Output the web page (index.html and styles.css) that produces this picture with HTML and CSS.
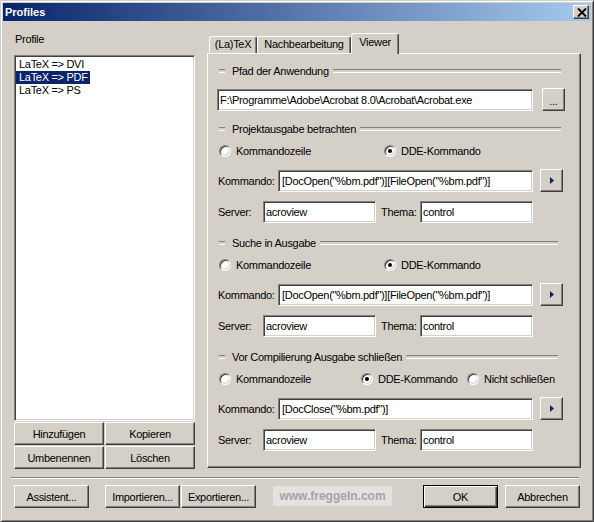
FILE: index.html
```html
<!DOCTYPE html>
<html lang="de">

<head>
    <meta charset="UTF-8">
    <title>Profiles</title>
    <link rel="stylesheet" href="styles.css">
</head>

<body>

    <div class="window">
        <div class="titlebar">
            <span class="title">Profiles</span>
            <button class="close-btn">
                <svg width="10" height="9" viewBox="0 0 10 9">
                    <path d="M1 0.5 L9 8.5 M9 0.5 L1 8.5" stroke="#000" stroke-width="1.9" fill="none" />
                </svg>
            </button>
        </div>

        <div class="main">
            <!-- Profil-Liste -->
            <div class="left-col">
                <div class="caption">Profile</div>
                <div class="listbox">
                    <div class="item"><span>LaTeX =&gt; DVI</span></div>
                    <div class="item selected"><span>LaTeX =&gt; PDF</span></div>
                    <div class="item"><span>LaTeX =&gt; PS</span></div>
                </div>
                <div class="btn-grid">
                    <button class="btn">Hinzufügen</button>
                    <button class="btn">Kopieren</button>
                    <button class="btn">Umbenennen</button>
                    <button class="btn">Löschen</button>
                </div>
            </div>

            <!-- Registerkarten -->
            <div class="right-col">
                <div class="tabs">
                    <div class="tab tab-latex">(La)TeX</div>
                    <div class="tab tab-post">Nachbearbeitung</div>
                    <div class="tab tab-viewer active">Viewer</div>
                </div>
                <div class="panel">
                    <div class="legend wide">Pfad der Anwendung</div>
                    <div class="row path-row">
                        <input class="field path-field" type="text" value="F:\Programme\Adobe\Acrobat 8.0\Acrobat\Acrobat.exe">
                        <button class="btn small-btn browse">...</button>
                    </div>

                    <div class="legend wide gap-top">Projektausgabe betrachten</div>
                    <div class="row radio-row">
                        <div class="opt opt-first"><span class="radio"></span>Kommandozeile</div>
                        <div class="opt"><span class="radio checked"></span>DDE-Kommando</div>
                    </div>
                    <div class="row cmd-row">
                        <label class="lbl lbl-cmd">Kommando:</label>
                        <input class="field cmd-field" type="text" value="[DocOpen(&quot;%bm.pdf&quot;)][FileOpen(&quot;%bm.pdf&quot;)]">
                        <button class="btn small-btn arrow"><svg width="4" height="7" viewBox="0 0 4 7"><path d="M0 0 L4 3.5 L0 7 Z" fill="#0a246a" /></svg></button>
                    </div>
                    <div class="row server-row">
                        <label class="lbl lbl-server">Server:</label>
                        <input class="field short-field" type="text" value="acroview">
                        <label class="lbl lbl-topic">Thema:</label>
                        <input class="field short-field" type="text" value="control">
                    </div>

                    <div class="legend gap-top-lg">Suche in Ausgabe</div>
                    <div class="row radio-row">
                        <div class="opt opt-first"><span class="radio"></span>Kommandozeile</div>
                        <div class="opt"><span class="radio checked"></span>DDE-Kommando</div>
                    </div>
                    <div class="row cmd-row">
                        <label class="lbl lbl-cmd">Kommando:</label>
                        <input class="field cmd-field" type="text" value="[DocOpen(&quot;%bm.pdf&quot;)][FileOpen(&quot;%bm.pdf&quot;)]">
                        <button class="btn small-btn arrow"><svg width="4" height="7" viewBox="0 0 4 7"><path d="M0 0 L4 3.5 L0 7 Z" fill="#0a246a" /></svg></button>
                    </div>
                    <div class="row server-row">
                        <label class="lbl lbl-server">Server:</label>
                        <input class="field short-field" type="text" value="acroview">
                        <label class="lbl lbl-topic">Thema:</label>
                        <input class="field short-field" type="text" value="control">
                    </div>

                    <div class="legend gap-top-lg">Vor Compilierung Ausgabe schließen</div>
                    <div class="row radio-row">
                        <div class="opt opt-narrow"><span class="radio"></span>Kommandozeile</div>
                        <div class="opt opt-mid"><span class="radio checked"></span>DDE-Kommando</div>
                        <div class="opt"><span class="radio"></span>Nicht schließen</div>
                    </div>
                    <div class="row cmd-row">
                        <label class="lbl lbl-cmd">Kommando:</label>
                        <input class="field cmd-field" type="text" value="[DocClose(&quot;%bm.pdf&quot;)]">
                        <button class="btn small-btn arrow"><svg width="4" height="7" viewBox="0 0 4 7"><path d="M0 0 L4 3.5 L0 7 Z" fill="#0a246a" /></svg></button>
                    </div>
                    <div class="row server-row">
                        <label class="lbl lbl-server">Server:</label>
                        <input class="field short-field" type="text" value="acroview">
                        <label class="lbl lbl-topic">Thema:</label>
                        <input class="field short-field" type="text" value="control">
                    </div>
                </div>
            </div>
        </div>

        <div class="separator"></div>

        <div class="footer">
            <button class="btn foot-btn">Assistent...</button>
            <button class="btn foot-btn import">Importieren...</button>
            <button class="btn foot-btn export">Exportieren...</button>
            <div class="watermark">www.freggeln.com</div>
            <button class="btn foot-btn default ok">OK</button>
            <button class="btn foot-btn cancel">Abbrechen</button>
        </div>
    </div>

</body>

</html>
```

FILE: styles.css
```css
/* Reset */
* {
    margin: 0;
    padding: 0;
    box-sizing: border-box;
}

body {
    background: #d4d0c8;
    font-family: "Liberation Sans", Arial, sans-serif;
    font-size: 11px;
    color: #000;
}

/* Fensterrahmen im Windows-Classic-Stil */
.window {
    width: 594px;
    height: 522px;
    background: #d4d0c8;
    border: 1px solid;
    border-color: #d4d0c8 #404040 #404040 #d4d0c8;
    box-shadow: inset 1px 1px #fff, inset -1px -1px #808080;
    padding: 2px;
}

.titlebar {
    height: 18px;
    display: flex;
    align-items: center;
    justify-content: space-between;
    background: linear-gradient(90deg, #0a246a, #a6caf0);
    padding-left: 2px;
}

.title {
    color: #fff;
    font-weight: bold;
    line-height: 13px;
}

.close-btn {
    width: 16px;
    height: 14px;
    margin-right: 2px;
    background: #d4d0c8;
    border: 1px solid;
    border-color: #fff #404040 #404040 #fff;
    box-shadow: inset -1px -1px #808080;
    display: flex;
    align-items: center;
    justify-content: center;
    padding-left: 1px;
}

.main,
.footer {
    letter-spacing: -0.3px;
}

.main {
    display: flex;
    gap: 12px;
    padding: 12px 10px 0 11px;
}

/* linke Spalte */
.left-col {
    width: 181px;
}

.caption {
    line-height: 13px;
    margin-left: 1px;
}

.listbox {
    height: 366px;
    margin-top: 9px;
    background: #fff;
    border: 1px solid;
    border-color: #808080 #fff #fff #808080;
    box-shadow: inset 1px 1px #404040, inset -1px -1px #d4d0c8;
    padding: 2px 1px;
}

.item {
    height: 13px;
    line-height: 13px;
}

.item span {
    display: inline-block;
    padding: 0 2px 0 3px;
}

.item.selected span {
    background: #0a246a;
    color: #fff;
}

.btn-grid {
    display: grid;
    grid-template-columns: 90px 90px;
    grid-auto-rows: 23px;
    gap: 1px;
    margin-top: 1px;
}

.btn {
    background: #d4d0c8;
    border: 1px solid;
    border-color: #fff #404040 #404040 #fff;
    box-shadow: inset -1px -1px #808080;
    font: inherit;
    letter-spacing: inherit;
    color: #000;
    display: flex;
    align-items: center;
    justify-content: center;
}

/* rechte Spalte */
.right-col {
    width: 374px;
}

.tabs {
    display: flex;
    align-items: flex-end;
    height: 20px;
    padding-left: 2px;
}

.tab {
    height: 17px;
    padding-top: 1px;
    line-height: 13px;
    text-align: center;
    border: 1px solid;
    border-bottom: 0;
    border-color: #fff #404040 #404040 #fff;
    box-shadow: inset -1px 0 #808080;
    border-radius: 3px 3px 0 0;
}

.tab-latex {
    width: 48px;
}

.tab-post {
    width: 94px;
}

.tab-viewer {
    width: 48px;
}

.tab.active {
    height: 21px;
    margin-bottom: -1px;
    padding-top: 2px;
    position: relative;
    z-index: 1;
    background: #d4d0c8;
}

.panel {
    height: 415px;
    border: 1px solid;
    border-color: #fff #404040 #404040 #fff;
    box-shadow: inset -1px -1px #808080;
    padding: 10px 0 0 9px;
}

.legend {
    display: flex;
    align-items: center;
    height: 14px;
    width: 339px;
    margin-left: 2px;
    line-height: 13px;
}

.legend.wide {
    width: 342px;
}

.legend::before,
.legend::after {
    content: '';
    height: 2px;
    border-top: 1px solid #808080;
    border-bottom: 1px solid #fff;
}

.legend::before {
    width: 6px;
    margin-right: 7px;
}

.legend::after {
    flex: 1;
    margin-left: 4px;
}

.gap-top {
    margin-top: 11px;
}

.gap-top-lg {
    margin-top: 13px;
}

.row {
    display: flex;
    align-items: center;
}

.path-row {
    margin-top: 10px;
    height: 23px;
}

.field {
    height: 22px;
    background: #fff;
    border: 1px solid;
    border-color: #808080 #fff #fff #808080;
    box-shadow: inset 1px 1px #404040, inset -1px -1px #d4d0c8;
    padding: 0 2px;
    font: inherit;
    letter-spacing: inherit;
    color: #000;
    outline: none;
}

.path-field {
    width: 316px;
}

.small-btn {
    width: 23px;
    height: 23px;
}

.browse {
    margin-left: 9px;
    padding-top: 3px;
}

.radio-row {
    height: 16px;
    margin-top: 7px;
    margin-left: 2px;
}

.opt {
    display: flex;
    align-items: center;
    gap: 5px;
}

.opt-first {
    width: 165px;
}

.opt-narrow {
    width: 142px;
}

.opt-mid {
    width: 106px;
}

.radio {
    width: 12px;
    height: 12px;
    border-radius: 50%;
    background: #fff;
    border: 1px solid;
    border-color: #808080 #fff #fff #808080;
    box-shadow: inset 1px 1px #404040, inset -1px -1px #d4d0c8;
    position: relative;
}

.radio.checked::after {
    content: '';
    position: absolute;
    left: 3px;
    top: 3px;
    width: 4px;
    height: 4px;
    border-radius: 50%;
    background: #000;
}

.cmd-row {
    margin-top: 10px;
    height: 23px;
}

.lbl {
    margin-left: 1px;
}

.lbl-cmd {
    width: 60px;
}

.cmd-field {
    width: 255px;
    padding-left: 3px;
}

.arrow {
    margin-left: 7px;
}

.server-row {
    margin-top: 9px;
    height: 22px;
}

.lbl-server {
    width: 45px;
}

.lbl-topic {
    width: 39px;
    margin-left: 5px;
}

.short-field {
    width: 113px;
}

/* unterer Bereich */
.separator {
    width: 568px;
    height: 2px;
    margin: 8px 0 0 8px;
    border-top: 1px solid #808080;
    border-bottom: 1px solid #fff;
}

.footer {
    display: flex;
    align-items: flex-start;
    margin-top: 6px;
    padding-left: 11px;
}

.foot-btn {
    width: 75px;
    height: 23px;
}

.import {
    margin-left: 16px;
}

.export {
    margin-left: 1px;
}

.watermark {
    width: 119px;
    height: 20px;
    margin: 1px 0 0 17px;
    background: #e4e2de;
    color: #a4a4a4;
    font-weight: bold;
    font-size: 12px;
    letter-spacing: 0;
    display: flex;
    align-items: center;
    justify-content: center;
}

.btn.default {
    border: 1px solid #000;
    box-shadow: inset 1px 1px #fff, inset -1px -1px #404040, inset -2px -2px #808080;
}

.ok {
    margin-left: 31px;
}

.cancel {
    margin-left: 7px;
}
```
